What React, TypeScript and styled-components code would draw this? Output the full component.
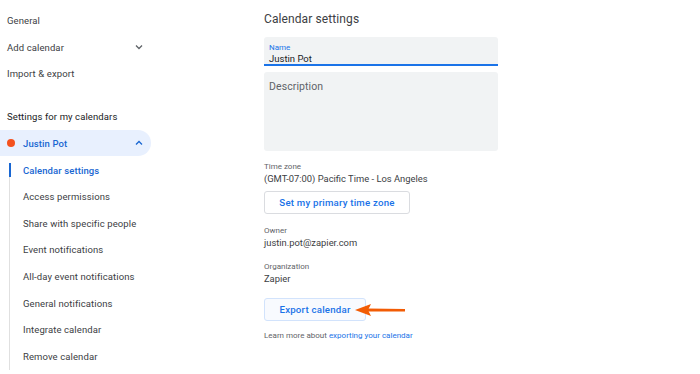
import styled, { createGlobalStyle } from "styled-components";

const GlobalStyle = createGlobalStyle`
  body {
    margin: 0;
    background: #fff;
    font-family: Roboto, "Liberation Sans", sans-serif;
    color: #3c4043;
  }
`;

const subItems = [
  "Calendar settings",
  "Access permissions",
  "Share with specific people",
  "Event notifications",
  "All-day event notifications",
  "General notifications",
  "Integrate calendar",
  "Remove calendar",
];

function Chevron({ up }: { up?: boolean }) {
  return (
    <svg width="10" height="10" viewBox="0 0 10 10">
      <path
        d={up ? "M2 6.5 L5 3.5 L8 6.5" : "M2 3.5 L5 6.5 L8 3.5"}
        fill="none"
        stroke={up ? "#1967d2" : "#5f6368"}
        strokeWidth="1.3"
      />
    </svg>
  );
}

function Arrow() {
  return (
    <svg width="52" height="14" viewBox="0 0 52 14">
      <path d="M14 5.4 L51 5.9 L51 8.4 L14 8.6 Z" fill="#f25c05" />
      <path d="M1 7 L17 1 L14 7 L17 13 Z" fill="#f25c05" />
    </svg>
  );
}

export default function App() {
  return (
    <>
      <GlobalStyle />
      <Page>
        <Sidebar>
          <TopItem>General</TopItem>
          <TopItem>
            Add calendar
            <Chevron />
          </TopItem>
          <TopItem>Import &amp; export</TopItem>
          <SectionTitle>Settings for my calendars</SectionTitle>
          <CalendarPill>
            <Dot />
            <PillName>Justin Pot</PillName>
            <Chevron up />
          </CalendarPill>
          <SubList>
            {subItems.map((item, i) => (
              <SubItem key={item} $active={i === 0}>
                {item}
              </SubItem>
            ))}
          </SubList>
        </Sidebar>

        <Main>
          <Title>Calendar settings</Title>
          <NameField>
            <FieldLabel>Name</FieldLabel>
            <FieldValue>Justin Pot</FieldValue>
          </NameField>
          <DescField>Description</DescField>

          <Info $top={10}>
            <InfoLabel>Time zone</InfoLabel>
            <InfoValue>(GMT-07:00) Pacific Time - Los Angeles</InfoValue>
          </Info>
          <OutlineButton>Set my primary time zone</OutlineButton>

          <Info $top={11}>
            <InfoLabel>Owner</InfoLabel>
            <InfoValue>justin.pot@zapier.com</InfoValue>
          </Info>
          <Info $top={12}>
            <InfoLabel>Organization</InfoLabel>
            <InfoValue>Zapier</InfoValue>
          </Info>

          <ExportRow>
            <ExportButton>Export calendar</ExportButton>
            <ArrowWrap>
              <Arrow />
            </ArrowWrap>
          </ExportRow>
          <LearnMore>
            Learn more about <Link>exporting your calendar</Link>
          </LearnMore>
        </Main>
      </Page>
    </>
  );
}

const Page = styled.div`
  display: flex;
  width: 700px;
  height: 374px;
  overflow: hidden;
`;

const Sidebar = styled.div`
  width: 264px;
  flex-shrink: 0;
  padding-top: 7px;
`;

const TopItem = styled.div`
  display: flex;
  align-items: center;
  justify-content: space-between;
  width: 137px;
  height: 26.7px;
  padding-left: 7px;
  font-size: 9.5px;
  color: #3c4043;
  letter-spacing: 0.1px;
`;

const SectionTitle = styled.div`
  margin-top: 16px;
  height: 27px;
  display: flex;
  align-items: center;
  padding-left: 7px;
  font-size: 9.5px;
  color: #202124;
  letter-spacing: 0.1px;
`;

const CalendarPill = styled.div`
  display: flex;
  align-items: center;
  width: 151px;
  height: 26px;
  box-sizing: border-box;
  padding: 0 7px 0 7px;
  background: #e8f0fe;
  border-radius: 0 13px 13px 0;
`;

const Dot = styled.span`
  width: 8px;
  height: 8px;
  border-radius: 50%;
  background: #f4511e;
  margin-right: 8px;
`;

const PillName = styled.span`
  flex: 1;
  font-size: 9.5px;
  font-weight: 500;
  color: #1967d2;
  letter-spacing: 0.1px;
`;

const SubList = styled.div`
  margin-left: 9px;
  margin-top: 7px;
  border-left: 1px solid #e0e0e0;
`;

const SubItem = styled.div<{ $active?: boolean }>`
  height: 26.7px;
  display: flex;
  align-items: center;
  padding-left: 14px;
  margin-left: -1px;
  font-size: 9.5px;
  letter-spacing: 0.1px;
  color: ${(p) => (p.$active ? "#1967d2" : "#3c4043")};
  font-weight: ${(p) => (p.$active ? 500 : 400)};
  background: ${(p) =>
    p.$active
      ? "linear-gradient(#1967d2, #1967d2) left 0px top 0px / 2px 14px no-repeat"
      : "none"};
  &:first-child {
    height: 14px;
    margin-bottom: 6px;
  }
`;

const Main = styled.div`
  width: 234px;
  display: flex;
  flex-direction: column;
  padding-top: 12px;
`;

const Title = styled.div`
  font-size: 12px;
  color: #3c4043;
  height: 17px;
  letter-spacing: 0.1px;
`;

const NameField = styled.div`
  margin-top: 8px;
  height: 29px;
  background: #f1f3f4;
  border-radius: 3px 3px 0 0;
  border-bottom: 2px solid #1a73e8;
  padding: 5px 5px 0;
  box-sizing: border-box;
  display: flex;
  flex-direction: column;
`;

const FieldLabel = styled.div`
  font-size: 8px;
  color: #1a73e8;
  line-height: 11px;
`;

const FieldValue = styled.div`
  font-size: 9.5px;
  color: #202124;
  line-height: 12px;
`;

const DescField = styled.div`
  margin-top: 6px;
  height: 79px;
  box-sizing: border-box;
  background: #f1f3f4;
  border-radius: 3px;
  padding: 8px 5px;
  font-size: 10.5px;
  color: #5f6368;
  letter-spacing: 0.1px;
`;

const Info = styled.div<{ $top: number }>`
  margin-top: ${(p) => p.$top}px;
  display: flex;
  flex-direction: column;
`;

const InfoLabel = styled.div`
  font-size: 8px;
  color: #5f6368;
  line-height: 11px;
`;

const InfoValue = styled.div`
  font-size: 9.4px;
  color: #3c4043;
  line-height: 13px;
`;

const OutlineButton = styled.div`
  margin-top: 6px;
  align-self: flex-start;
  width: 146px;
  height: 23px;
  box-sizing: border-box;
  border: 1px solid #dadce0;
  border-radius: 3px;
  display: flex;
  align-items: center;
  justify-content: center;
  font-size: 9.7px;
  font-weight: 500;
  color: #1a73e8;
  letter-spacing: 0.2px;
`;

const ExportRow = styled.div`
  margin-top: 13px;
  display: flex;
  align-items: center;
`;

const ExportButton = styled(OutlineButton)`
  margin-top: 0;
  width: 102px;
  background: #f8fafe;
  border-color: #d2e3fc;
`;

const ArrowWrap = styled.div`
  margin-left: -12px;
  display: flex;
  align-items: center;
`;

const LearnMore = styled.div`
  margin-top: 10px;
  font-size: 8px;
  color: #5f6368;
`;

const Link = styled.span`
  color: #1a73e8;
`;
